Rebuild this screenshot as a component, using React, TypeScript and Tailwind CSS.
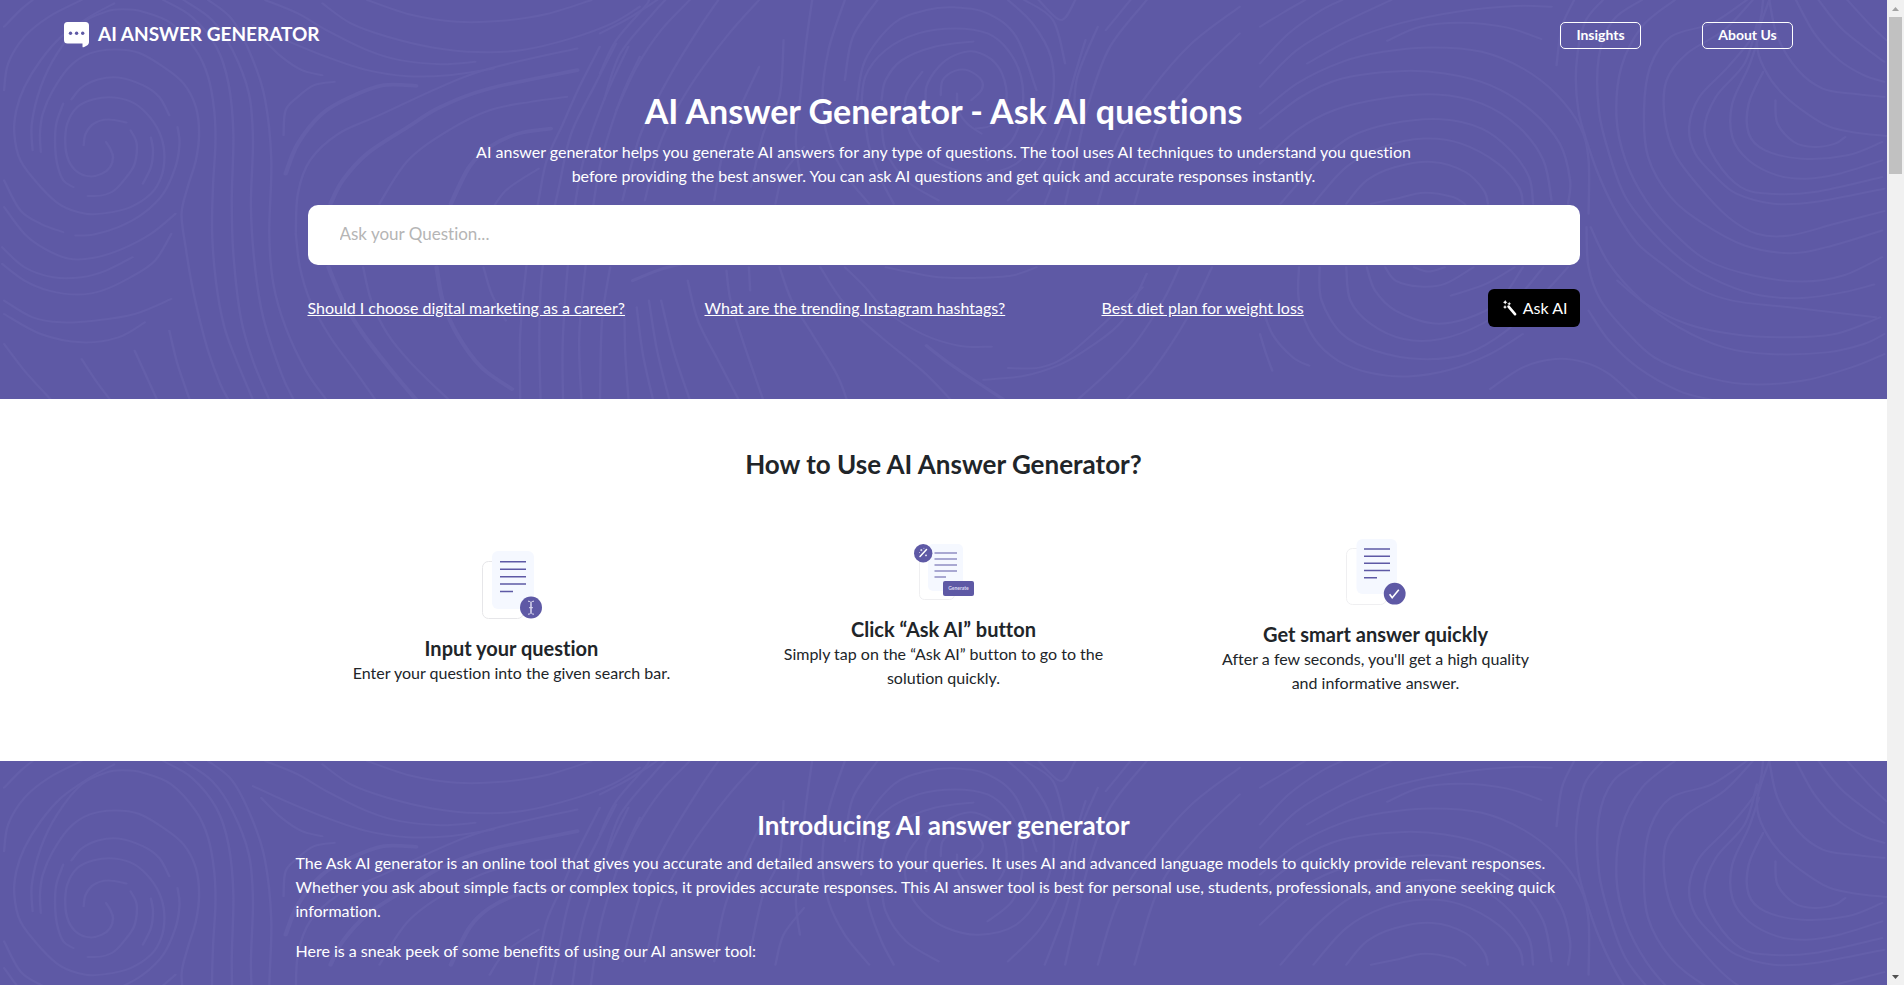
import React from "react";

type Pt = [number, number];

// Turns a "x,y x,y ..." list into a smooth Catmull-Rom path.
function smooth(list: string): string {
  const p: Pt[] = list.split(" ").map((s) => s.split(",").map(Number) as Pt);
  let d = `M${p[0][0]} ${p[0][1]}`;
  for (let i = 0; i < p.length - 1; i++) {
    const a = p[Math.max(0, i - 1)];
    const b = p[i];
    const c = p[i + 1];
    const e = p[Math.min(p.length - 1, i + 2)];
    d += `C${b[0] + (c[0] - a[0]) / 6} ${b[1] + (c[1] - a[1]) / 6} ${c[0] - (e[0] - b[0]) / 6} ${
      c[1] - (e[1] - b[1]) / 6
    } ${c[0]} ${c[1]}`;
  }
  return d;
}

const leftLines = [
  "260,425 270,445 277,470 270,500 250,520 220,528 190,515 168,480 160,430 165,370 190,320 230,297 280,292 330,310 370,355 395,410 403,470 395,530 370,580 320,620 260,638 210,640 150,615 100,560 50,480 35,400 40,330 60,260 100,180 150,110 220,50 280,10",
  "205,435 210,400 230,370 265,358 310,367",
  "320,390 335,430 330,490 310,530 280,570 250,585 215,587",
  "370,412 375,450 370,500 350,550",
  "175,298 200,262 240,238 290,232 350,255 390,290 415,345",
  "155,310 138,370 135,430 140,490 155,540 180,560",
  "100,455 98,400 105,340 130,270 170,200 220,160 280,148 340,158 400,200 450,250 480,320 488,400 480,480 460,560 445,640 455,740 470,850 490,960 510,1050 540,1150 560,1197",
  "80,450 78,370 100,260 140,160 200,70 260,35 300,28 350,35 420,70 480,150 510,230 525,330 528,430 522,560 520,700 530,850 550,980 580,1080 620,1197",
  "10,270 20,190 60,110 120,50 200,0",
  "10,80 50,30 80,0",
  "400,0 470,50 530,140 560,250 572,400 568,600 572,760 590,950 620,1080 660,1197",
  "450,0 520,60 570,150 610,280 620,420 615,620 625,800 645,950 690,1120 720,1197",
  "510,0 570,60 620,180 650,300 665,480 660,700 670,850 700,980 750,1110 800,1197",
  "10,540 50,630 100,670 155,695",
  "185,705 230,702 290,680 350,640 400,580 430,500 440,430 435,380",
  "10,620 60,700 110,745 170,775 230,772 300,745 370,700 430,640",
  "5,740 60,800 130,830 200,830 260,810 325,770",
  "5,790 60,840 120,870 190,882 250,870 320,830 380,780 420,700",
  "10,900 80,950 150,965 230,960 330,940 420,895",
  "10,940 100,1000 200,1025 290,1010 355,965",
  "200,1075 235,1140 270,1197",
  "330,1050 360,1130 385,1197",
  "415,990 435,1090 465,1197",
  "10,1030 60,1110 125,1197",
  "640,110 690,170 740,210 790,225",
  "620,75 700,120 800,170 900,210 1000,228 1100,225 1210,205",
  "650,0 730,40 800,90 900,150 980,180 1080,192 1165,185",
  "790,10 860,70 950,110 1060,142 1170,156 1280,150 1400,115 1500,70 1568,20",
  "900,0 1010,45 1120,65 1230,62 1340,42 1450,0",
  "695,405 700,330 730,290 770,255 820,245",
  "725,700 730,580 760,480 830,400 930,345 1080,260 1200,205 1415,145",
  "930,610 1000,480 1100,390 1200,330 1300,305 1390,290",
  "1200,640 1240,570 1320,505",
  "725,700 735,800 760,900 810,1010 870,1110 920,1197",
  "890,800 910,900 950,1000 1010,1090 1100,1197",
  "1185,800 1205,880 1240,960",
  "1470,140 1420,260 1380,370 1340,480 1320,600 1290,800 1275,1000 1275,1197",
  "1510,130 1460,250 1400,400 1370,560 1330,800 1322,1000 1325,1197",
  "1540,140 1480,300 1430,480 1400,700 1380,1000 1380,1197",
  "1568,170 1520,300 1470,500 1440,750 1420,1000 1425,1197",
];

const leftBold = [
  "700,520 730,430 790,340 860,290 940,255 1020,257",
  "810,610 840,540 900,460 1000,380 1080,320 1200,265 1415,210",
  "1105,610 1150,500 1200,440 1270,400 1350,385",
  "805,800 840,900 890,1000 960,1110 1020,1197",
  "1070,800 1085,900 1120,1000 1180,1100 1255,1165",
];

const middleLines = [
  "0,100 70,55 140,0",
  "0,220 40,120 110,20 120,0",
  "10,300 50,160 130,40 160,0",
  "40,330 90,200 150,90 220,0",
  "55,600 100,400 170,230 240,90 290,0",
  "110,600 150,420 220,260 310,110 390,0",
  "280,600 310,420 390,200",
  "430,610 450,520 500,440",
  "370,560 400,400 440,290 450,120",
  "520,0 505,130 490,300 480,420 490,520",
  "600,0 560,150 545,300 560,420 600,520 660,610",
  "680,0 620,110 600,240",
  "630,300 650,180 720,70 800,30 870,22 950,40 1020,110 1070,270",
  "640,340 650,230 700,150 780,100 870,85 950,100 1000,150 1032,230 1035,330 1010,420 950,480",
  "790,215 750,290 755,380 790,450 850,500 930,520 1020,490 1080,400 1110,290 1105,170 1060,70 1000,0",
  "690,300 700,240 740,180 820,140 915,124",
  "800,330 800,260 830,200 870,165 920,155 970,190 995,260 990,330 960,375 920,385",
  "835,285 840,240 870,212 905,212 935,240 935,270 910,300",
  "875,280 878,330 900,370 935,400",
  "690,360 700,450 750,540 830,600",
  "720,610 690,540 660,440 650,360",
  "1040,0 1110,60 1140,190",
  "1075,0 1130,60 1165,0",
  "1190,120 1160,240 1130,380 1080,500 1000,600",
  "1240,90 1300,0",
  "1220,80 1170,230 1160,350 1140,450 1090,610",
  "1340,0 1250,140 1200,300 1170,450 1140,610",
  "1568,20 1450,130 1350,270 1270,420 1220,610",
  "1568,100 1460,230 1370,380 1310,610",
  "700,800 760,815 830,830 920,832 1010,825 1070,800",
  "600,800 650,860 700,930 790,1000 880,1035 960,1038",
  "540,800 600,910 690,1010 790,1110 860,1197",
  "1000,1102 1080,1100 1150,1060 1260,940 1330,860",
  "940,1137 1040,1125 1130,1090 1200,1040 1280,960 1340,820",
  "1420,800 1380,900 1310,1030 1240,1120 1170,1197",
  "1500,800 1440,950 1360,1100 1290,1197",
  "365,800 368,870",
  "310,810 320,900 350,1020 400,1197",
  "215,840 240,960 290,1080 340,1197",
  "440,800 470,900 520,1000 580,1120 605,1197",
  "150,900 180,1050 220,1197",
  "120,900 140,1050 170,1197",
  "90,920 105,1060 130,1197",
  "60,930 62,1060 70,1197",
  "25,800 5,960 0,1197",
];

const middleBold = ["80,840 140,810 200,790", "800,1035 870,1100 990,1197"];

const rightLines = [
  "0,80 60,35 110,0",
  "0,190 70,100 150,30 200,0",
  "0,260 90,150 200,70 320,0",
  "115,190 220,120 340,70 480,35 620,18 710,20",
  "310,122 390,80 490,68 600,82 685,117",
  "0,340 90,250 200,185 300,155 420,142 540,155 640,205 720,280 780,380 800,480 800,640",
  "0,385 100,290 200,235 340,213 450,220 560,255 660,330 730,430 755,540 750,610",
  "0,490 90,390 180,330 300,295 430,283 540,310 630,380 690,480 710,600",
  "50,610 130,500 220,410 320,370 440,357 540,385 610,450 655,530 665,610",
  "130,610 210,500 300,440 400,415 490,430 580,490 630,560 640,610",
  "210,610 260,540 330,500 420,485 500,515 545,570 555,610",
  "270,610 330,595 400,577 470,590 500,612",
  "305,800 330,840 390,858 450,850 520,800",
  "375,800 410,813 450,800",
  "260,800 280,870 330,930 420,968 500,955 580,905 640,800",
  "210,800 220,900 270,970 350,1015 440,1015 540,970 620,900 690,800",
  "145,800 150,900 200,1000 280,1050 390,1075 500,1060 600,990 690,880 750,800",
  "95,800 95,900 130,1010 190,1080 270,1117 360,1127 460,1108 560,1060 640,1000",
  "0,900 30,1000 80,1070 120,1095",
  "0,1000 15,1060 30,1110",
  "465,885 550,850 620,800",
  "560,1165 640,1100 720,1075 790,1085 850,1120 920,1197",
  "765,0 735,80 722,195",
  "835,0 790,70 770,200 775,330 800,440 830,540 870,640 920,730 990,800 1060,860 1150,900 1290,920 1500,950",
  "930,0 860,60 825,170 825,330 850,460 890,590 960,700 1040,790 1130,850 1220,885 1320,892 1420,875 1495,852",
  "1010,0 930,80 880,200 868,350 890,480 940,600 1010,700 1090,780 1200,825 1320,843 1420,825 1515,770",
  "1185,0 1100,70 1000,110 950,200 935,330 945,470 1000,590 1080,670 1180,735 1290,758 1380,740 1515,690",
  "1200,0 1130,90 1040,160 990,240 985,350 1010,460 1070,560 1140,650 1210,700 1290,705 1400,670 1520,632",
  "1225,0 1210,90 1140,200 1070,290 1045,380 1060,460 1110,530 1160,580 1250,610 1350,605 1520,565",
  "1210,70 1180,190 1110,290 1082,390 1110,480 1170,560 1240,580 1350,575 1515,530",
  "1215,110 1190,200 1150,310 1150,410 1190,480 1260,525 1330,535 1410,520 1515,480",
  "1225,215 1190,310 1190,400 1230,450 1320,475 1430,465 1515,425",
  "1240,0 1210,120 1230,210 1280,290 1370,370 1440,395 1525,407",
  "1255,300 1260,370 1300,425 1350,440 1400,430 1425,410",
  "1240,0 1260,110 1310,210 1370,265 1440,280 1520,290",
  "1305,0 1350,100 1410,180 1470,225 1520,245",
  "1360,0 1420,90 1520,185",
  "1430,0 1490,80 1525,120",
  "795,680 800,800 830,900 890,990 960,1070 1060,1120 1180,1150 1320,1140 1440,1100 1520,1060",
  "805,680 850,790 930,900 1020,980 1130,1040 1240,1060 1380,1055 1470,1030 1520,1000",
  "870,840 940,910 1040,970 1150,1000 1270,1010 1400,1000 1510,950",
  "800,930 850,1020 920,1100 1020,1170 1100,1197",
];

function Swirls() {
  return (
    <svg
      aria-hidden="true"
      className="pointer-events-none absolute top-0 left-0 h-[400px] w-full"
      viewBox="0 0 1887 400"
      preserveAspectRatio="none"
      fill="none"
      stroke="#645faa"
      strokeLinecap="round"
      strokeLinejoin="round"
    >
      <g strokeWidth="6">
        <g transform="scale(0.408 0.334)">
          {leftLines.map((l) => (
            <path key={l} d={smooth(l)} />
          ))}
          {leftBold.map((l) => (
            <path key={l} d={smooth(l)} strokeWidth="11" />
          ))}
        </g>
        <g transform="translate(600 0) scale(0.408 0.334)">
          {middleLines.map((l) => (
            <path key={l} d={smooth(l)} />
          ))}
          {middleBold.map((l) => (
            <path key={l} d={smooth(l)} strokeWidth="9" />
          ))}
        </g>
        <g transform="translate(1260 0) scale(0.4107 0.334)">
          {rightLines.map((l) => (
            <path key={l} d={smooth(l)} />
          ))}
        </g>
      </g>
    </svg>
  );
}

function Logo() {
  return (
    <svg aria-hidden="true" width="26" height="26" viewBox="0 0 26 26">
      <path
        fill="#fff"
        d="M3.5 0h18a3.5 3.5 0 0 1 3.500 3.500v16.800c0 2-1.600 3.200-3 3.800-.8.4-1.700 1-2.600 1.200-.7.1-.9-.3-.9-.9V21.500H3.500A3.500 3.500 0 0 1 0 18V3.500A3.500 3.500 0 0 1 3.500 0z"
      />
      <g fill="#5e59a5">
        <circle cx="6.500" cy="11.200" r="1.700" />
        <circle cx="12.600" cy="11.200" r="1.700" />
        <circle cx="18.700" cy="11.200" r="1.700" />
      </g>
    </svg>
  );
}

function Wand() {
  return (
    <svg aria-hidden="true" width="14" height="16" viewBox="0 0 14 16">
      <path d="M5.600 6.600 12 14.200" stroke="#fff" strokeWidth="2.600" strokeLinecap="round" />
      <g fill="#fff">
        <path d="M2.200 0 3 1.400 4.400 2.200 3 3 2.200 4.400 1.400 3 0 2.200 1.400 1.400z" />
        <path d="M6.200 1.800 6.800 3.200 8.200 3.800 6.800 4.400 6.200 5.800 5.600 4.400 4.200 3.800 5.600 3.200z" />
        <path d="M2 5 2.700 6.400 4 7 2.700 7.700 2 9 1.300 7.700 0 7 1.300 6.400z" />
      </g>
    </svg>
  );
}

function InputIcon() {
  return (
    <svg aria-hidden="true" width="60" height="70" viewBox="0 0 60 70">
      <rect x="0.500" y="12.500" width="41" height="57" rx="6" fill="#fff" stroke="#e6e6e9" />
      <rect x="10" y="2" width="42" height="58" rx="6" fill="#f5f8ff" />
      <path
        d="M18 12.800h26M18 20.200h26M18 27.700h26M18 35h26M18 42.500h13"
        stroke="#5e59a5"
        strokeWidth="1.500"
      />
      <circle cx="49" cy="58.500" r="11" fill="#5e59a5" />
      <path
        d="M46 52.200c1.600 0 3 .6 3 2v9c0 1.400-1.400 2-3 2M52 52.200c-1.600 0-3 .6-3 2v9c0 1.400 1.400 2 3 2M47 58.700h4"
        stroke="#dcdaf0"
        strokeWidth="1"
        fill="none"
      />
    </svg>
  );
}

function ClickIcon() {
  return (
    <svg aria-hidden="true" width="60" height="56" viewBox="0 0 60 56">
      <rect x="5.500" y="10.500" width="35" height="45" rx="5" fill="#fff" stroke="#efeff1" />
      <rect x="14" y="0" width="35" height="47" rx="5" fill="#f5f8ff" />
      <path
        d="M20.500 9h22.500M20.500 15h22.500M20.500 21h22.500M20.500 27h22.500M20.500 33h11.500"
        stroke="#5e59a5"
        strokeWidth="1.200"
      />
      <circle cx="9.200" cy="9.200" r="9.200" fill="#5e59a5" />
      <path d="M6 12.500 12.500 5.500" stroke="#fff" strokeWidth="1.500" strokeLinecap="round" />
      <path
        d="M7.300 5v2.200M6.200 6.100h2.200M12 10.400v2M11 11.400h2M9.500 4.400h.8M5.200 8.500h.8"
        stroke="#fff"
        strokeWidth=".7"
      />
      <rect x="29" y="37" width="31" height="15" rx="2" fill="#5e59a5" />
      <text
        x="44.500"
        y="46"
        fontSize="5"
        fontWeight="700"
        fill="#dcdaf0"
        textAnchor="middle"
        fontFamily="Lato, sans-serif"
      >
        Generate
      </text>
    </svg>
  );
}

function AnswerIcon() {
  return (
    <svg aria-hidden="true" width="60" height="66" viewBox="0 0 60 66">
      <rect x="0.500" y="9.500" width="40" height="56" rx="6" fill="#fff" stroke="#efeff1" />
      <rect x="10.500" y="0" width="40.500" height="55" rx="6" fill="#f5f8ff" />
      <path
        d="M18 10h26M18 17.200h26M18 24.300h26M18 31.500h26M18 38.700h13"
        stroke="#5e59a5"
        strokeWidth="1.400"
      />
      <circle cx="48.700" cy="54.700" r="10.900" fill="#5e59a5" />
      <path d="M43.600 55.200 46.200 58.800 52.800 50.800" stroke="#fff" strokeWidth="1.600" fill="none" />
    </svg>
  );
}

const suggestions = [
  "Should I choose digital marketing as a career?",
  "What are the trending Instagram hashtags?",
  "Best diet plan for weight loss",
];

const steps = [
  {
    icon: <InputIcon />,
    title: "Input your question",
    lines: ["Enter your question into the given search bar."],
  },
  {
    icon: <ClickIcon />,
    title: "Click “Ask AI” button",
    lines: ["Simply tap on the “Ask AI” button to go to the", "solution quickly."],
  },
  {
    icon: <AnswerIcon />,
    title: "Get smart answer quickly",
    lines: ["After a few seconds, you'll get a high quality", "and informative answer."],
  },
];

function Scrollbar() {
  return (
    <div
      aria-hidden="true"
      className="flex w-[17px] shrink-0 flex-col items-center justify-between bg-[#f1f1f1]"
    >
      <div className="flex flex-col items-center">
        <svg width="17" height="17" viewBox="0 0 17 17">
          <path d="M5 11 8.500 7 12 11z" fill="#a3a3a3" />
        </svg>
        <div className="h-[157px] w-[13px] bg-[#c1c1c1]" />
      </div>
      <svg width="17" height="17" viewBox="0 0 17 17">
        <path d="M5 7 8.500 11 12 7z" fill="#505050" />
      </svg>
    </div>
  );
}

export default function App() {
  return (
    <div className="flex h-screen font-[Lato,sans-serif] text-base text-[#212529] [font-variant-ligatures:none]">
      <main className="min-w-0 flex-1 overflow-y-auto [scrollbar-width:none]">
        <section className="relative overflow-hidden bg-[#5e59a5] pb-[72px] text-white">
          <Swirls />
          <div className="relative">
            <header className="flex items-start justify-between pt-[22px] pr-[94px] pl-16">
              <a href="#" className="flex gap-2 text-[19px] leading-6 font-bold">
                <Logo />
                AI ANSWER GENERATOR
              </a>
              <nav className="flex gap-[61px]">
                <a
                  href="#insights"
                  className="flex h-[27px] w-[81px] justify-center rounded-[5px] border border-white text-sm leading-6 font-bold"
                >
                  Insights
                </a>
                <a
                  href="#about"
                  className="flex h-[27px] w-[91px] justify-center rounded-[5px] border border-white text-sm leading-6 font-bold"
                >
                  About Us
                </a>
              </nav>
            </header>
            <form className="mx-auto max-w-[1272px]" onSubmit={(e) => e.preventDefault()}>
              <h1 className="mt-[41px] text-center text-[34px] leading-[42px] font-bold">
                AI Answer Generator - Ask AI questions
              </h1>
              <p className="mt-2 text-center text-base leading-6">
                AI answer generator helps you generate AI answers for any type of questions. The
                tool uses AI techniques to understand you question
                <br />
                before providing the best answer. You can ask AI questions and get quick and
                accurate responses instantly.
              </p>
              <input
                type="text"
                aria-label="Ask your question"
                placeholder="Ask your Question..."
                className="mt-[17px] block h-[60px] w-full rounded-[10px] bg-white px-8 pb-1 text-[17px] text-gray-800 outline-none placeholder:text-[#b5b5b5]"
              />
              <div className="mt-6 flex items-center">
                <ul className="grid flex-1 grid-cols-[397px_397px_1fr]">
                  {suggestions.map((s) => (
                    <li key={s}>
                      <a href="#" className="leading-6 underline">
                        {s}
                      </a>
                    </li>
                  ))}
                </ul>
                <button
                  type="submit"
                  className="flex h-[38px] w-[92px] items-center justify-end gap-1.5 rounded-md bg-black pr-3"
                >
                  <Wand />
                  Ask AI
                </button>
              </div>
            </form>
          </div>
        </section>

        <section className="bg-white pt-[49px] pb-[66px]">
          <h2 className="text-center text-[26px] leading-8 font-bold">
            How to Use AI Answer Generator?
          </h2>
          <div className="mx-auto mt-[59px] grid max-w-[1296px] grid-cols-3 items-center">
            {steps.map((s) => (
              <article key={s.title} className="flex flex-col items-center text-center">
                {s.icon}
                <h3 className="mt-[17px] text-xl leading-6 font-bold">{s.title}</h3>
                <p className="mt-px leading-6">
                  {s.lines.map((l) => (
                    <span key={l} className="block">
                      {l}
                    </span>
                  ))}
                </p>
              </article>
            ))}
          </div>
        </section>

        <section className="relative overflow-hidden bg-[#5e59a5] pt-[48px] pb-12 text-white">
          <Swirls />
          <div className="relative mx-auto max-w-[1296px]">
            <h2 className="text-center text-[26px] leading-8 font-bold">
              Introducing AI answer generator
            </h2>
            <p className="mt-[10px] leading-6">
              The Ask AI generator is an online tool that gives you accurate and detailed answers
              to your queries. It uses AI and advanced language models to quickly provide relevant
              responses.
              <br />
              Whether you ask about simple facts or complex topics, it provides accurate
              responses. This AI answer tool is best for personal use, students, professionals,
              and anyone seeking quick
              <br />
              information.
            </p>
            <p className="mt-4 leading-6">
              Here is a sneak peek of some benefits of using our AI answer tool:
            </p>
          </div>
        </section>
      </main>
      <Scrollbar />
    </div>
  );
}
